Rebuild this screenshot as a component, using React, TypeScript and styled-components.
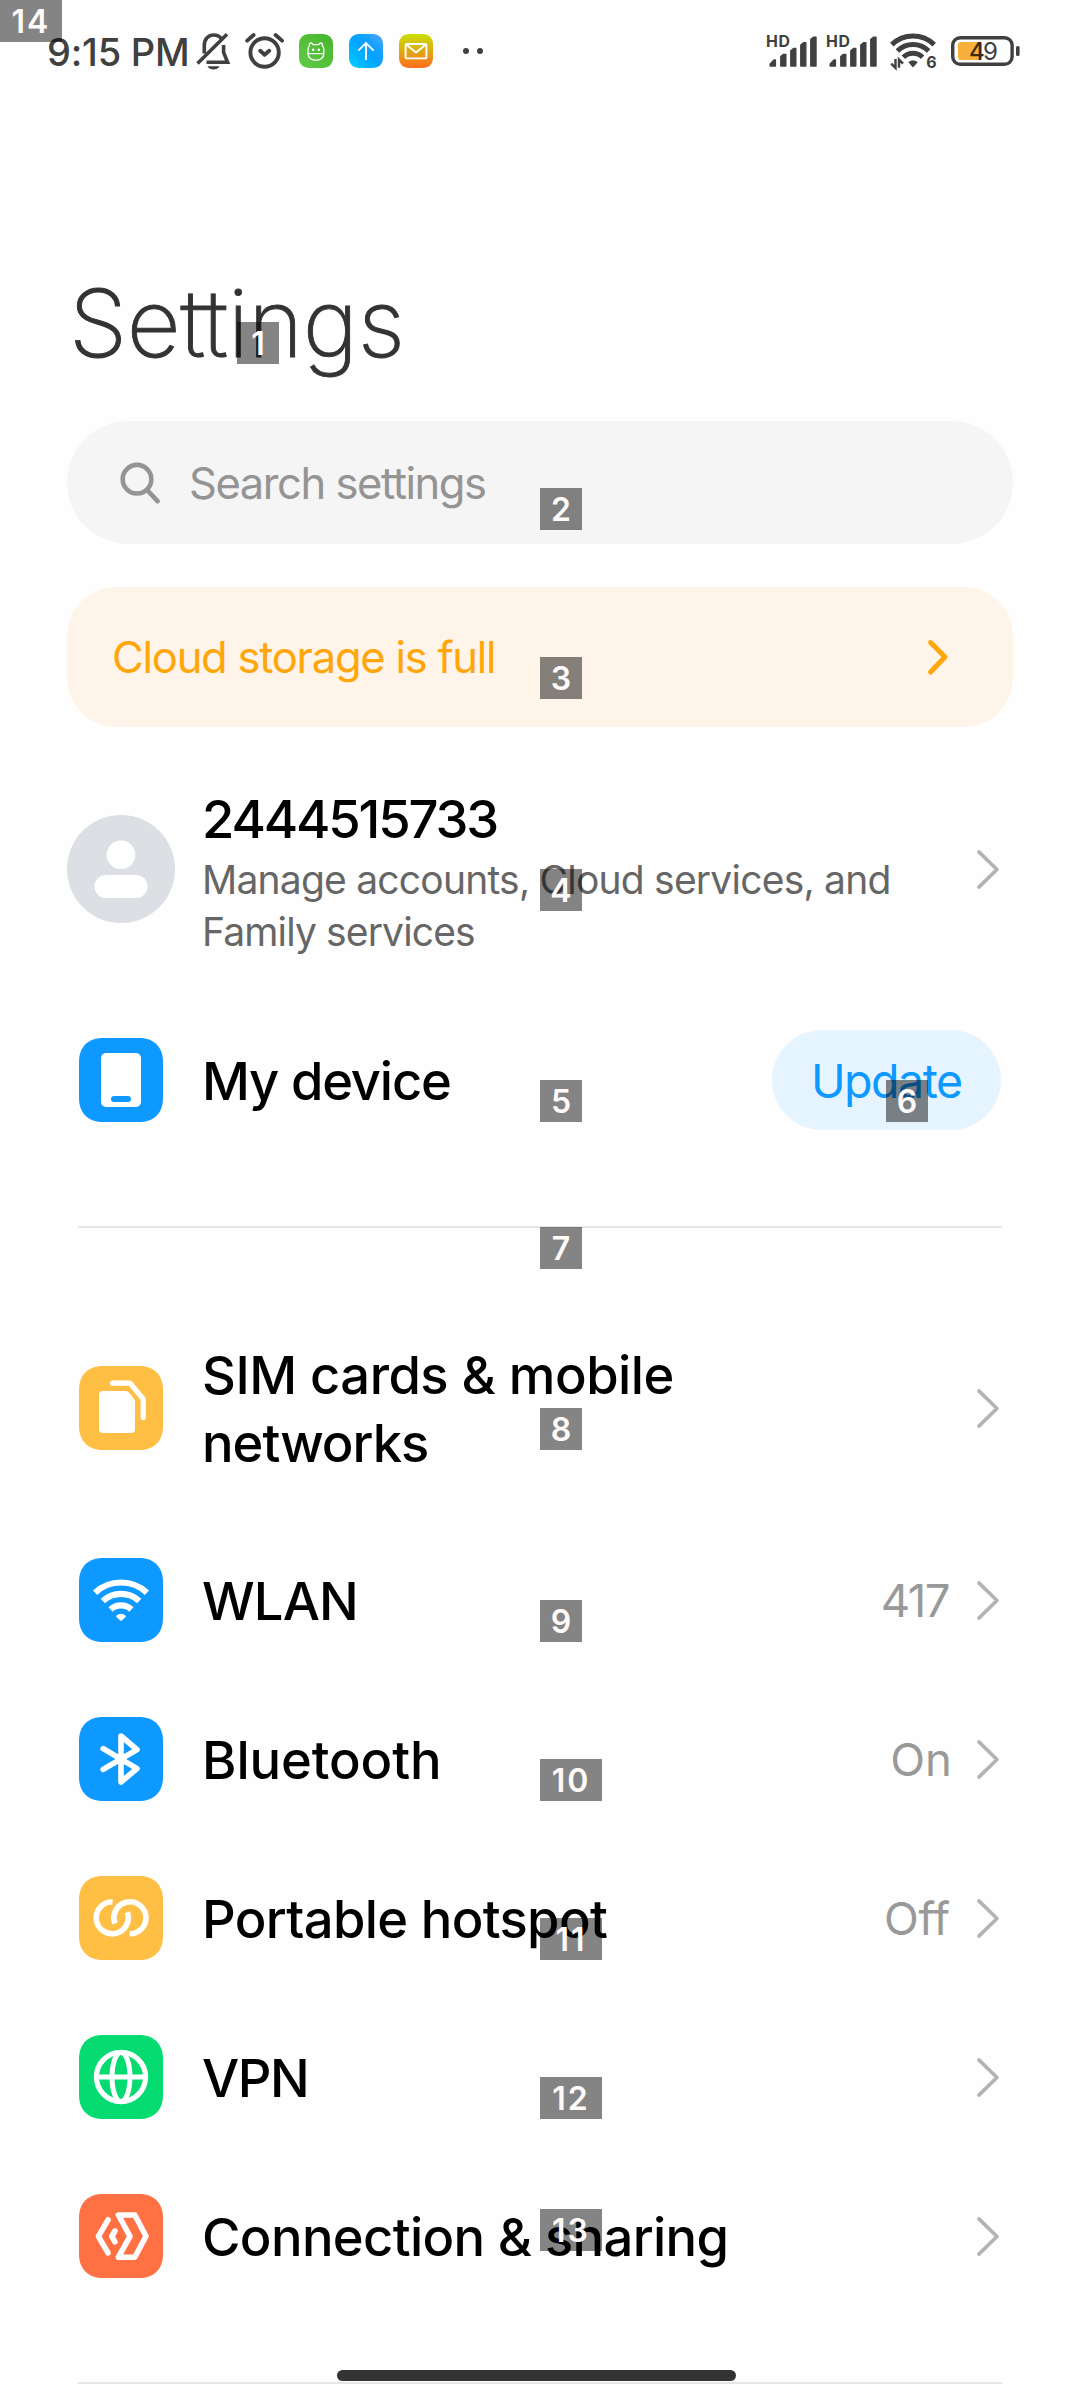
import React from "react";
import styled, { createGlobalStyle } from "styled-components";

const GlobalStyle = createGlobalStyle`
  * { box-sizing: border-box; }
  body { margin: 0; background: #fefefe; }
  svg { display: block; flex: none; overflow: visible; }
`;

const Screen = styled.div`
  position: relative;
  display: flex;
  flex-direction: column;
  width: 1080px;
  height: 2400px;
  overflow: hidden;
  background: #fefefe;
  color: #000;
  font-family: Inter, "Liberation Sans", sans-serif;
  font-feature-settings: "liga" 0, "calt" 0;
`;

/* Status bar */
const StatusBar = styled.header`
  display: flex;
  flex: none;
  align-items: center;
  justify-content: space-between;
  height: 102px;
  padding: 0 60px 0 47px;
`;
const StatusLeft = styled.div`
  display: flex;
  align-items: center;
  gap: 15px;
`;
const StatusRight = styled.div`
  display: flex;
  align-items: center;
`;
const Clock = styled.span`
  width: 134px;
  padding-top: 1px;
  font-size: 38px;
  font-weight: 500;
  letter-spacing: -0.2px;
  white-space: nowrap;
  color: #404040;
`;
const AppIcons = styled.div`
  display: flex;
  gap: 16px;
`;
const MoreDots = styled.div`
  display: flex;
  gap: 8px;
  margin-left: 15px;
`;
const Dot = styled.i`
  width: 6px;
  height: 6px;
  border-radius: 50%;
  background: #404040;
`;
const Glyph = styled.div<{ $gap: number }>`
  margin-left: ${p => p.$gap}px;
`;

/* Header */
const Title = styled.h1`
  flex: none;
  margin: 166px 0 0 69px;
  font-size: 93.5px;
  font-weight: 200;
  line-height: 110px;
  letter-spacing: -0.4px;
  color: #333;
  -webkit-text-stroke: 0.9px #333;
`;
const SearchBox = styled.div`
  display: flex;
  flex: none;
  align-items: center;
  gap: 29px;
  height: 123px;
  margin: 43px 67px 0;
  padding-left: 53px;
  border-radius: 62px;
  background: #f5f5f5;
  color: #949494;
  font-size: 43.5px;
  letter-spacing: -1.44px;
`;
const CloudBanner = styled.div`
  display: flex;
  flex: none;
  align-items: center;
  justify-content: space-between;
  height: 140px;
  margin: 43px 67px 0;
  padding: 0 65px 0 45px;
  border-radius: 49px;
  background: #fff4ea;
  color: #ffa60a;
  font-size: 43.5px;
  letter-spacing: -1.25px;
`;

/* Account */
const AccountRow = styled.div`
  display: flex;
  flex: none;
  align-items: center;
  height: 200px;
  margin-top: 42px;
  padding: 0 81px 0 67px;
`;
const AccountText = styled.div`
  flex: 1;
  margin: 8px 0 0 27px;
`;
const AccountName = styled.div`
  font-size: 52.5px;
  font-weight: 500;
  line-height: 60px;
  letter-spacing: -2.15px;
`;
const AccountNote = styled.div<{ $track: number }>`
  font-size: 39px;
  line-height: 52px;
  letter-spacing: ${p => p.$track}px;
  white-space: nowrap;
  color: #666;
`;
const NoteBlock = styled.div`
  margin-top: 5px;
`;

/* Rows */
const Row = styled.div<{ $height: number }>`
  display: flex;
  flex: none;
  align-items: center;
  height: ${p => p.$height}px;
  padding: 0 81px 0 79px;
`;
const DeviceRow = styled(Row)`
  margin-top: 31px;
  padding-right: 79px;
`;
const RowLabel = styled.div`
  flex: 1;
  padding-top: 3px;
  margin-left: 39px;
`;
const LabelLine = styled.div<{ $track: number }>`
  font-size: 52.5px;
  font-weight: 500;
  line-height: 67.5px;
  letter-spacing: ${p => p.$track}px;
  white-space: nowrap;
`;
const RowValue = styled.span<{ $track: number; $gap: number }>`
  margin-right: ${p => p.$gap}px;
  font-size: 45.5px;
  letter-spacing: ${p => p.$track}px;
  color: #999;
`;
const UpdateButton = styled.button`
  width: 229px;
  height: 100px;
  padding: 1px 0 0 39px;
  border: 0;
  border-radius: 50px;
  background: #e6f4ff;
  color: #0d99ff;
  font: 400 46.5px Inter, "Liberation Sans", sans-serif;
  letter-spacing: -1.48px;
  text-align: left;
`;
const Divider = styled.hr<{ $top: number }>`
  flex: none;
  width: 924px;
  height: 2px;
  margin: ${p => p.$top}px 78px 0;
  border: 0;
  background: #e5e5e5;
`;
const RowList = styled.section`
  display: flex;
  flex: none;
  flex-direction: column;
  gap: 1px;
  margin-top: 68px;
`;

/* Overlays */
const HomeBar = styled.div`
  position: absolute;
  left: 337px;
  top: 2370px;
  width: 399px;
  height: 11px;
  border-radius: 6px;
  background: #333;
`;
const Tag = styled.span<{ $x: number; $y: number; $wide: boolean }>`
  position: absolute;
  left: ${p => p.$x}px;
  top: ${p => p.$y}px;
  width: ${p => (p.$wide ? 62 : 42)}px;
  height: 42px;
  background: rgba(0, 0, 0, 0.48);
  color: #fffafa;
  font-size: 32px;
  font-weight: 600;
  line-height: 43px;
  letter-spacing: ${p => (p.$wide ? 2 : 0)}px;
  text-align: center;
`;

const INK = "#404040";

const MutedBell = () => (
  <svg width="34" height="38" viewBox="0 0 34 38" fill="none" stroke={INK} strokeWidth="3.6">
    <path d="M8.3 21.5V13.5C8.3 7 12.5 3 17.5 3C21 3 23.6 4.2 25.3 6.6" />
    <path d="M1.5 31.5L31 2.2" />
    <path d="M27.6 13V20.5L31.6 30.2H10.5" />
    <path d="M11.5 34.2H23.5C21.5 38.6 13.5 38.6 11.5 34.2Z" fill={INK} stroke="none" />
  </svg>
);
const Alarm = () => (
  <svg width="39" height="38" viewBox="0 0 39 38" fill="none" stroke={INK} strokeWidth="3.9" strokeLinecap="round" strokeLinejoin="round">
    <circle cx="19.6" cy="20.5" r="14.2" />
    <path d="M2.2 8.6L8.6 3M30.6 3L37 8.6M15.2 18.8L19.6 22.8L24.2 18.8" />
  </svg>
);
const PetApp = () => (
  <svg width="34" height="34" viewBox="0 0 34 34" fill="none" stroke="#fff" strokeWidth="1.3" strokeLinejoin="round">
    <defs>
      <linearGradient id="pet" x1="0" y1="1" x2="1" y2="0">
        <stop offset="0" stopColor="#62cb45" />
        <stop offset="1" stopColor="#45b52c" />
      </linearGradient>
    </defs>
    <rect width="34" height="34" rx="9.5" fill="url(#pet)" stroke="none" />
    <path d="M9 20V15C9 13.6 9.6 12.6 10.5 11.8L10.3 9.6L12.6 9L14 10.6H19.6L21.2 9L23.4 9.6L23.2 11.8C24.2 12.6 24.8 13.6 24.8 15V20C24.8 23.6 21.2 26.2 16.9 26.2S9 23.6 9 20ZM9 19.7H24.8" />
    <g fill="#fff" stroke="none"><circle cx="14.2" cy="15.8" r="1.3" /><circle cx="19.8" cy="15.8" r="1.3" /></g>
  </svg>
);
const UploadApp = () => (
  <svg width="34" height="34" viewBox="0 0 34 34" fill="none" stroke="#fff" strokeWidth="1.9">
    <defs>
      <linearGradient id="upload" x1="0" y1="1" x2="1" y2="0">
        <stop offset="0" stopColor="#00d0ff" />
        <stop offset="0.5" stopColor="#04a3ff" />
        <stop offset="0.7" stopColor="#14a2ff" />
        <stop offset="1" stopColor="#5ba6ff" />
      </linearGradient>
    </defs>
    <rect width="34" height="34" rx="9.5" fill="url(#upload)" stroke="none" />
    <path d="M17 26V9M9.3 16.6L17 9L24.7 16.6" />
  </svg>
);
const MailApp = () => (
  <svg width="34" height="34" viewBox="0 0 34 34" fill="none" stroke="#fff" strokeWidth="1.9" strokeLinejoin="round">
    <defs>
      <linearGradient id="mail" x1="0" y1="0" x2="0" y2="1">
        <stop offset="0" stopColor="#c9df00" />
        <stop offset="0.5" stopColor="#dfa912" />
        <stop offset="1" stopColor="#ff6d1f" />
      </linearGradient>
    </defs>
    <rect width="34" height="34" rx="9.5" fill="url(#mail)" stroke="none" />
    <rect x="6.6" y="10" width="20.8" height="14.4" rx="1" />
    <path d="M7.2 10.5L17 18.4L26.8 10.5" />
  </svg>
);
const Signal = () => (
  <svg width="50" height="34" viewBox="0 0 50 34" fill={INK}>
    <text x="-1" y="13" fontSize="15.8" fontWeight="700" letterSpacing="0.8" fontFamily="Inter, sans-serif">HD</text>
    <g stroke={INK} strokeWidth="1.4" strokeLinejoin="round">
      <path d="M3.2 32V30L7 26H8.4V32Z" />
      <path d="M13.8 32V22.5L16.5 20.4H18.8V32Z" />
      <path d="M23.8 32V16.8L26.5 14.5H28.8V32Z" />
      <path d="M33.8 32V11L36.5 8.8H38.8V32Z" />
      <path d="M43.8 32V5.4L46.5 3.2H49V32Z" />
    </g>
  </svg>
);
const StatusWifi = () => (
  <svg width="46" height="36" viewBox="0 0 46 36" fill="none" stroke={INK} strokeWidth="5">
    <path d="M1.8 11.6A30.5 30.5 0 0 1 44.2 11.6M7.4 17.9A22 22 0 0 1 38.6 17.9M13.4 24.3A13.6 13.6 0 0 1 32.6 24.3" />
    <path d="M18.3 29.2C20.8 26.8 25.2 26.8 27.7 29.2L23 34.4Z" fill={INK} stroke="none" />
    <path d="M5.5 26V34.8L1.2 30.6M9 34.8V26.6L13 30.6" strokeWidth="2.4" />
    <text x="36.2" y="34.6" fontSize="16" fontWeight="700" fontFamily="Inter, sans-serif" fill={INK} stroke="none">6</text>
  </svg>
);
const Battery = () => (
  <svg width="69" height="30" viewBox="0 0 69 30">
    <rect x="1.7" y="1.7" width="59.4" height="26.6" rx="7.5" fill="none" stroke={INK} strokeWidth="3.4" />
    <rect x="7" y="6" width="24" height="18" rx="3" fill="#f7b03c" />
    <rect x="65" y="10" width="3.6" height="10" rx="1.6" fill={INK} />
    <text x="18" y="23.6" fontSize="24" fontFamily="Inter, sans-serif" fill={INK} letterSpacing="-1.8">
      <tspan fontWeight="500" fill="#3a2b10">4</tspan><tspan>9</tspan>
    </text>
  </svg>
);
const SearchIcon = () => (
  <svg width="40" height="42" viewBox="0 0 40 42" fill="none" stroke="#949494" strokeWidth="4.6" strokeLinecap="round">
    <circle cx="17" cy="17.2" r="14.3" />
    <path d="M27.2 28.2L37.6 39.2" />
  </svg>
);
const Chevron = () => (
  <svg width="22" height="39" viewBox="0 0 22 39" fill="none" stroke="#b3b3b3" strokeWidth="3.6" strokeLinecap="round" strokeLinejoin="round">
    <path d="M1.9 1.9L20 19.5L1.9 37.1" />
  </svg>
);
const BannerChevron = () => (
  <svg width="20" height="35" viewBox="0 0 20 35" fill="none" stroke="#ffa60a" strokeWidth="5" strokeLinecap="round" strokeLinejoin="round">
    <path d="M2.6 2.6L17 17L2.6 32" />
  </svg>
);
const Avatar = () => (
  <svg width="108" height="108" viewBox="0 0 108 108" fill="#fff">
    <circle cx="54" cy="54" r="54" fill="#dce0e5" />
    <circle cx="54" cy="39.8" r="14.3" />
    <rect x="27.5" y="60" width="53" height="23" rx="11.5" />
  </svg>
);

const Tile = ({ color, children }: { color: string; children: React.ReactNode }) => (
  <svg width="84" height="84" viewBox="0 0 84 84" fill="none" stroke="#fff" strokeWidth="5.6" strokeLinecap="round" strokeLinejoin="round">
    <path d="M24 0H60C76 0 84 10 84 24V60C84 76 74 84 60 84H24C8 84 0 74 0 60V24C0 8 10 0 24 0Z" fill={color} stroke="none" />
    {children}
  </svg>
);

const icons = {
  device: (
    <Tile color="#0d99ff">
      <rect x="22" y="15" width="40" height="54" rx="5" fill="#fff" stroke="none" />
      <rect x="32" y="58" width="20" height="6" rx="3" fill="#0d99ff" stroke="none" />
    </Tile>
  ),
  sim: (
    <Tile color="#ffbf44">
      <path d="M24 25H46.5C48 25 49 25.5 50 26.6L55 32.8C55.7 33.7 56 34.5 56 35.7V63.5C56 65.8 54.8 67 52.5 67H24C21.5 67 20 65.8 20 63.5V28.5C20 26.2 21.5 25 24 25Z" fill="#fff" stroke="none" />
      <path d="M33.6 17.2H51L64.2 33V51.6" strokeWidth="5.2" />
    </Tile>
  ),
  wlan: (
    <Tile color="#0d99ff">
      <path d="M16.1 34.7A38 38 0 0 1 67.9 34.7M23.8 43A26.7 26.7 0 0 1 60.2 43M31.6 51.4A15.2 15.2 0 0 1 52.4 51.4" strokeWidth="6.2" strokeLinecap="butt" />
      <path d="M42 61.5L38.4 58.4A5.4 5.4 0 0 1 45.6 58.4Z" fill="#fff" strokeWidth="2.4" />
    </Tile>
  ),
  bluetooth: (
    <Tile color="#0d99ff">
      <path d="M24.2 31.7L58 51.6L42 65V19L58 32.6L24.2 52.4" />
    </Tile>
  ),
  hotspot: (
    <Tile color="#ffbf44">
      <path d="M33.6 25.8A16 16 0 1 0 48.3 36.3M50.6 57.8A16 16 0 1 0 36 47.5" strokeLinecap="butt" />
    </Tile>
  ),
  vpn: (
    <Tile color="#06db71">
      <circle cx="42" cy="42" r="24.6" strokeWidth="5.2" />
      <ellipse cx="42" cy="42" rx="9" ry="24.6" strokeWidth="5" />
      <path d="M17.4 42H66.6" strokeWidth="5" />
    </Tile>
  ),
  sharing: (
    <Tile color="#ff7043">
      <path d="M29 25.8L19.4 42.3L29 58.8M35.9 37L32.8 42.3L35.9 47.8M39.4 21H55.8L67 42.3L55.8 63.2H39.4L51 42.3Z" />
    </Tile>
  ),
};

type Entry = {
  icon: keyof typeof icons;
  lines: [string, number][];
  value?: { text: string; track: number; gap: number };
};
const entries: Entry[] = [
  { icon: "sim", lines: [["SIM cards & mobile", -0.52], ["networks", -1]] },
  { icon: "wlan", lines: [["WLAN", -0.85]], value: { text: "417", track: -1.5, gap: 28 } },
  { icon: "bluetooth", lines: [["Bluetooth", -0.1]], value: { text: "On", track: 0, gap: 25 } },
  { icon: "hotspot", lines: [["Portable hotspot", -0.66]], value: { text: "Off", track: -0.2, gap: 27 } },
  { icon: "vpn", lines: [["VPN", -1.45]] },
  { icon: "sharing", lines: [["Connection & sharing", -0.64]] },
];

const tags: [number, number, number][] = [
  [1, 237, 322], [2, 540, 488], [3, 540, 657], [4, 540, 869], [5, 540, 1080],
  [6, 886, 1080], [7, 540, 1227], [8, 540, 1408], [9, 540, 1600], [10, 540, 1759],
  [11, 540, 1918], [12, 540, 2077], [13, 540, 2209], [14, 0, 0],
];

export default function App() {
  return (
    <Screen>
      <GlobalStyle />
      <StatusBar>
        <StatusLeft>
          <Clock>9:15 PM</Clock>
          <MutedBell />
          <Alarm />
          <AppIcons>
            <PetApp />
            <UploadApp />
            <MailApp />
          </AppIcons>
          <MoreDots><Dot /><Dot /></MoreDots>
        </StatusLeft>
        <StatusRight>
          <Signal />
          <Glyph $gap={10}><Signal /></Glyph>
          <Glyph $gap={13}><StatusWifi /></Glyph>
          <Glyph $gap={15}><Battery /></Glyph>
        </StatusRight>
      </StatusBar>

      <Title>Settings</Title>
      <SearchBox><SearchIcon /><span>Search settings</span></SearchBox>
      <CloudBanner><span>Cloud storage is full</span><BannerChevron /></CloudBanner>

      <AccountRow>
        <Avatar />
        <AccountText>
          <AccountName>2444515733</AccountName>
          <NoteBlock>
            <AccountNote $track={-0.78}>Manage accounts, Cloud services, and</AccountNote>
            <AccountNote $track={-0.86}>Family services</AccountNote>
          </NoteBlock>
        </AccountText>
        <Chevron />
      </AccountRow>

      <DeviceRow $height={160}>
        {icons.device}
        <RowLabel><LabelLine $track={-1.18}>My device</LabelLine></RowLabel>
        <UpdateButton>Update</UpdateButton>
      </DeviceRow>

      <Divider $top={66} />

      <RowList>
        {entries.map(({ icon, lines, value }) => (
          <Row key={icon} $height={lines.length > 1 ? 224 : 158}>
            {icons[icon]}
            <RowLabel>
              {lines.map(([text, track]) => <LabelLine key={text} $track={track}>{text}</LabelLine>)}
            </RowLabel>
            {value && <RowValue $track={value.track} $gap={value.gap}>{value.text}</RowValue>}
            <Chevron />
          </Row>
        ))}
      </RowList>

      <Divider $top={67} />

      <HomeBar />
      {tags.map(([n, x, y]) => <Tag key={n} $x={x} $y={y} $wide={n > 9}>{n}</Tag>)}
    </Screen>
  );
}
